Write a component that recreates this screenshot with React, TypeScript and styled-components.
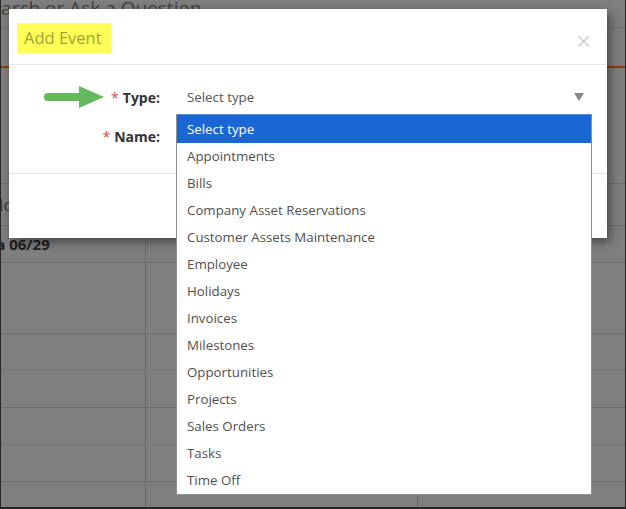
import React, { FC } from "react"
import styled, { createGlobalStyle } from "styled-components"

const GlobalStyle = createGlobalStyle`
  html, body {
    margin: 0;
    padding: 0;
    background: #808080;
  }
  body {
    font-family: "Open Sans", "Noto Sans", sans-serif;
  }
`

const types = [
  "Select type",
  "Appointments",
  "Bills",
  "Company Asset Reservations",
  "Customer Assets Maintenance",
  "Employee",
  "Holidays",
  "Invoices",
  "Milestones",
  "Opportunities",
  "Projects",
  "Sales Orders",
  "Tasks",
  "Time Off"
]

// page behind the dialog, already dimmed
const Page = styled.div`
  position: relative;
  width: 626px;
  height: 509px;
  box-sizing: border-box;
  overflow: hidden;
  background: #7f7f7f;
  border: 1px solid #262626;
  border-top-width: 0;
  border-bottom-width: 2px;
`
const TopBar = styled.div`
  height: 66px;
  border-bottom: 2px solid #8a3d0c;
  display: flex;
  flex-direction: column;
`
const SearchText = styled.div`
  margin-left: -21px;
  margin-top: -6px;
  font-size: 19px;
  line-height: 28px;
  color: #404040;
  height: 33px;
  border-bottom: 1px solid #6e6e6e;
  white-space: nowrap;
`
const Calendar = styled.div`
  display: flex;
  flex-direction: column;
`
const Row = styled.div<{ $h: number; $line?: "solid" | "dotted" }>`
  height: ${ p => p.$h }px;
  box-sizing: border-box;
  border-bottom: 1px ${ p => p.$line || "solid" } #6c6c6c;
  display: grid;
  grid-template-columns: 145px 272px 1fr;
`
const Cell = styled.div<{ $split?: boolean }>`
  border-right: ${ p => p.$split ? "1px solid #6c6c6c" : "none" };
  display: flex;
  align-items: center;
  font-size: 14px;
  color: #2b2b2b;
  overflow: hidden;
`
const DayLabel = styled.span`
  margin-left: -13px;
  font-weight: 700;
  font-size: 15px;
  color: #1e1e1e;
  white-space: nowrap;
`
const SideText = styled.span`
  margin-left: -12px;
  font-size: 16px;
  color: #333;
`

// dialog
const Modal = styled.div`
  position: absolute;
  left: 8px;
  top: 9px;
  width: 598px;
  height: 229px;
  background: #fff;
  box-shadow: 3px 4px 10px rgba(0, 0, 0, 0.45);
  display: flex;
  flex-direction: column;
`
const ModalHeader = styled.div`
  height: 56px;
  box-sizing: border-box;
  border-bottom: 1px solid #e5e5e5;
  display: flex;
  align-items: flex-start;
  justify-content: space-between;
  padding: 14px 14px 0 8px;
`
const Highlight = styled.h4`
  margin: 0;
  background: #ffff57;
  padding: 0 9px 0 7px;
  height: 30px;
  line-height: 29px;
  font-size: 16.5px;
  font-weight: 400;
  color: #a3a33a;
`
const Close = styled.span`
  font-size: 22px;
  line-height: 22px;
  margin-top: 7px;
  color: #c4c4c4;
  font-family: "DejaVu Sans", sans-serif;
  font-weight: 300;
`
const ModalBody = styled.div`
  height: 109px;
  box-sizing: border-box;
  border-bottom: 1px solid #e5e5e5;
  padding-top: 18px;
  display: grid;
  grid-template-columns: 151px 1fr;
  grid-auto-rows: 39px;
  column-gap: 16px;
`
const Label = styled.label`
  display: flex;
  align-items: center;
  justify-content: flex-end;
  font-size: 14px;
  font-weight: 700;
  color: #333;
  height: 28px;
`
const Star = styled.span`
  color: #e64545;
  margin-right: 4px;
  font-weight: 400;
`
const Arrow = styled.svg`
  margin-right: 7px;
`
const Control = styled.div`
  position: relative;
  margin-right: 15px;
`
const SelectBox = styled.div`
  height: 28px;
  display: flex;
  align-items: center;
  justify-content: space-between;
  padding: 0 8px 0 11px;
  font-size: 13.3px;
  color: #555;
`
const Caret = styled.span`
  width: 0;
  height: 0;
  border-left: 5px solid transparent;
  border-right: 5px solid transparent;
  border-top: 8px solid #8a8a8a;
`
const Menu = styled.ul`
  position: absolute;
  top: 31px;
  left: 0;
  right: 0;
  margin: 0;
  padding: 0;
  list-style: none;
  background: #fff;
  border: 1px solid #8e8e8e;
  border-top-color: #5b8fd6;
  z-index: 2;
`
const Option = styled.li<{ $active?: boolean }>`
  height: ${ p => p.$active ? 28 : 27 }px;
  line-height: ${ p => p.$active ? 28 : 27 }px;
  padding-left: 10px;
  font-size: 13.3px;
  color: ${ p => p.$active ? "#fff" : "#505050" };
  background: ${ p => p.$active ? "#1a66d2" : "transparent" };
`

const GreenArrow: FC = () => (
  <Arrow width="60" height="22" viewBox="0 0 60 22">
    <line x1="4" y1="11" x2="40" y2="11" stroke="#66b85f" strokeWidth="8" strokeLinecap="round" />
    <polygon points="35,0 60,11 35,22" fill="#66b85f" />
  </Arrow>
)

const App: FC = () => (
  <>
    <GlobalStyle />
    <Page>
      <TopBar>
        <SearchText>Search or Ask a Question</SearchText>
      </TopBar>
      <Calendar>
        <Row $h={ 116 }><Cell /><Cell /><Cell /></Row>
        <Row $h={ 42 }><Cell><SideText>Mon</SideText></Cell><Cell /><Cell /></Row>
        <Row $h={ 37 }><Cell $split><DayLabel>Sa 06/29</DayLabel></Cell><Cell $split /><Cell /></Row>
        <Row $h={ 71 }><Cell $split /><Cell $split /><Cell /></Row>
        <Row $h={ 36 } $line="dotted"><Cell $split /><Cell $split /><Cell /></Row>
        <Row $h={ 38 }><Cell $split /><Cell $split /><Cell /></Row>
        <Row $h={ 37 } $line="dotted"><Cell $split /><Cell $split /><Cell /></Row>
        <Row $h={ 37 }><Cell $split /><Cell $split /><Cell /></Row>
        <Row $h={ 40 }><Cell $split /><Cell $split /><Cell /></Row>
      </Calendar>

      <Modal>
        <ModalHeader>
          <Highlight>Add Event</Highlight>
          <Close>×</Close>
        </ModalHeader>
        <ModalBody>
          <Label>
            <GreenArrow />
            <Star>*</Star>Type:
          </Label>
          <Control>
            <SelectBox>
              Select type
              <Caret />
            </SelectBox>
            <Menu>
              { types.map((t, i) => (
                <Option key={ t } $active={ i === 0 }>{ t }</Option>
              )) }
            </Menu>
          </Control>
          <Label><Star>*</Star>Name:</Label>
          <Control />
        </ModalBody>
      </Modal>
    </Page>
  </>
)

export default App
